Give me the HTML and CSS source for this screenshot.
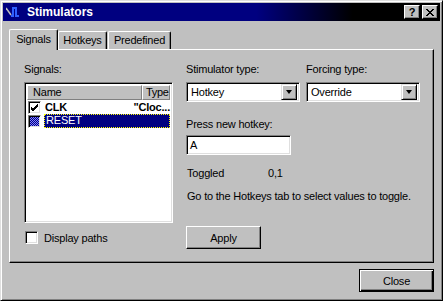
FILE: index.html
```html
<!DOCTYPE html>
<html lang="en">
<head>
    <meta charset="UTF-8">
    <title>Stimulators</title>
    <link rel="stylesheet" href="styles.css">
</head>
<body>
    <div class="window">
        <div class="titlebar">
            <svg class="app-icon" width="14" height="12" viewBox="0 0 14 12">
                <path d="M0 2 L5 9" stroke="#c0c0c0" stroke-width="1.5" fill="none"/>
                <path d="M5 10 H7 V2 H10 V10 H13" stroke="#3060ff" stroke-width="2" fill="none"/>
            </svg>
            <span class="title">Stimulators</span>
            <div class="caption-buttons">
                <div class="cap-btn">?</div>
                <div class="cap-btn close-x">
                    <svg width="8" height="7" viewBox="0 0 8 7"><path d="M0 0 L7 7 M1 0 L8 7 M7 0 L0 7 M8 0 L1 7" stroke="#000" stroke-width="1" fill="none"/></svg>
                </div>
            </div>
        </div>

        <div class="body">
            <div class="tabs">
                <div class="tab active">Signals</div>
                <div class="tab">Hotkeys</div>
                <div class="tab wide">Predefined</div>
            </div>

            <div class="panel">
                <div class="col-left">
                    <div class="label">Signals:</div>
                    <div class="listbox">
                        <div class="list-header">
                            <div class="hcol hname">Name</div>
                            <div class="hcol htype">Type</div>
                        </div>
                        <div class="row">
                            <span class="check small checked">
                                <svg width="9" height="9" viewBox="0 0 9 9"><path d="M1 4 L3 6 L8 1 M1 5 L3 7 L8 2 M1 6 L3 8 L8 3" stroke="#000" fill="none"/></svg>
                            </span>
                            <span class="cell-name bold">CLK</span>
                            <span class="cell-type bold">"Cloc...</span>
                        </div>
                        <div class="row">
                            <span class="check small dither"></span>
                            <span class="cell-sel">RESET</span>
                        </div>
                    </div>
                    <div class="checkline">
                        <span class="check"></span>
                        <span>Display paths</span>
                    </div>
                </div>

                <div class="col-right">
                    <div class="combo-row">
                        <div class="combo-group">
                            <div class="label">Stimulator type:</div>
                            <div class="combo">
                                <span class="combo-text">Hotkey</span>
                                <span class="combo-btn"><span class="arrow"></span></span>
                            </div>
                        </div>
                        <div class="combo-group">
                            <div class="label">Forcing type:</div>
                            <div class="combo">
                                <span class="combo-text">Override</span>
                                <span class="combo-btn"><span class="arrow"></span></span>
                            </div>
                        </div>
                    </div>
                    <div class="label hotkey-label">Press new hotkey:</div>
                    <div class="textbox">A</div>
                    <div class="toggled">
                        <span class="toggled-label">Toggled</span>
                        <span>0,1</span>
                    </div>
                    <div class="hint">Go to the Hotkeys tab to select values to toggle.</div>
                    <div class="btn apply">Apply</div>
                </div>
            </div>

            <div class="footer">
                <div class="btn default">Close</div>
            </div>
        </div>
    </div>
</body>
</html>
```

FILE: styles.css
```css
* { margin: 0; padding: 0; box-sizing: border-box; }

body {
    font-family: 'Liberation Sans', Arial, sans-serif;
    font-size: 11px;
    letter-spacing: -0.2px;
    color: #000000;
    background: #c0c0c0;
}

.window {
    width: 443px;
    height: 301px;
    background: #c0c0c0;
    border: 1px solid;
    border-color: #dfdfdf #000000 #000000 #dfdfdf;
    box-shadow: inset 1px 1px 0 #ffffff, inset -1px -1px 0 #808080;
    padding: 2px;
}

.titlebar {
    height: 18px;
    display: flex;
    align-items: center;
    padding: 0 2px 0 3px;
    background: linear-gradient(90deg, #000080 0%, #000080 58%, #000000 80%);
    color: #ffffff;
}

.app-icon {
    margin-right: 7px;
}

.title {
    font-weight: bold;
    font-size: 12px;
    letter-spacing: 0;
    flex: 1;
}

.caption-buttons {
    display: flex;
    gap: 2px;
}

.cap-btn {
    width: 16px;
    height: 14px;
    background: #c0c0c0;
    color: #000000;
    border: 1px solid;
    border-color: #ffffff #000000 #000000 #ffffff;
    box-shadow: inset -1px -1px 0 #808080;
    font-weight: bold;
    font-size: 11px;
    line-height: 12px;
    display: flex;
    align-items: center;
    justify-content: center;
}

.body {
    padding: 8px 6px 0 6px;
}

.tabs {
    display: flex;
    height: 20px;
    align-items: flex-end;
    position: relative;
    z-index: 1;
}

.tab {
    width: 49px;
    height: 18px;
    padding-top: 2px;
    text-align: center;
    border: 1px solid;
    border-bottom: none;
    border-color: #ffffff #000000 #000000 #ffffff;
    box-shadow: inset -1px 0 0 #808080;
    border-radius: 2px 2px 0 0;
}

.tab.active {
    height: 21px;
    margin-bottom: -1px;
    padding-top: 3px;
    background: #c0c0c0;
}

.tab.wide {
    width: 63px;
    margin-left: 1px;
}

.panel {
    width: 425px;
    height: 214px;
    border: 1px solid;
    border-color: #ffffff #000000 #000000 #ffffff;
    box-shadow: inset -1px -1px 0 #808080;
    display: flex;
    padding: 13px 0 0 14px;
    gap: 13px;
}

.label {
    height: 13px;
    line-height: 13px;
    margin-bottom: 6px;
    white-space: nowrap;
}

.col-left {
    width: 149px;
}

.listbox {
    width: 149px;
    height: 141px;
    background: #ffffff;
    border: 1px solid;
    border-color: #808080 #ffffff #ffffff #808080;
    box-shadow: inset 1px 1px 0 #000000, inset -1px -1px 0 #dfdfdf;
    padding: 2px;
}

.list-header {
    display: flex;
    height: 15px;
}

.hcol {
    background: #c0c0c0;
    border: 1px solid;
    border-color: #ffffff #808080 #808080 #ffffff;
    line-height: 13px;
    padding-left: 5px;
    white-space: nowrap;
}

.hname {
    width: 115px;
}

.htype {
    flex: 1;
    padding-left: 3px;
    letter-spacing: -0.3px;
}

.row {
    display: flex;
    align-items: center;
    height: 14px;
}

.check {
    width: 13px;
    height: 13px;
    background: #ffffff;
    border: 1px solid;
    border-color: #808080 #ffffff #ffffff #808080;
    box-shadow: inset 1px 1px 0 #000000, inset -1px -1px 0 #dfdfdf;
    display: inline-flex;
    align-items: center;
    justify-content: center;
    flex: none;
}

.check.small {
    margin-left: 1px;
}

.check.dither {
    background-color: #0000a0;
    background-image: repeating-conic-gradient(#8080ff 0 25%, #000080 0 50%);
    background-size: 2px 2px;
}

.cell-name {
    width: 103px;
    padding-left: 4px;
}

.cell-type {
    flex: 1;
    white-space: nowrap;
}

.bold {
    font-weight: bold;
}

.cell-sel {
    flex: 1;
    height: 14px;
    margin-left: 3px;
    background: #000080;
    color: #ffffff;
    line-height: 12px;
    padding-left: 2px;
    outline: 1px dotted #ffff00;
    outline-offset: -1px;
}

.checkline {
    display: flex;
    align-items: center;
    gap: 6px;
    margin-top: 8px;
    margin-left: 1px;
}

.col-right {
    width: 234px;
}

.combo-row {
    display: flex;
    gap: 6px;
}

.combo-group {
    width: 114px;
}

.combo {
    height: 20px;
    background: #ffffff;
    border: 1px solid;
    border-color: #808080 #ffffff #ffffff #808080;
    box-shadow: inset 1px 1px 0 #000000, inset -1px -1px 0 #dfdfdf;
    display: flex;
    align-items: center;
    padding: 2px;
}

.combo-text {
    flex: 1;
    padding-left: 2px;
}

.combo-btn {
    width: 16px;
    height: 16px;
    background: #c0c0c0;
    border: 1px solid;
    border-color: #dfdfdf #000000 #000000 #dfdfdf;
    box-shadow: inset 1px 1px 0 #ffffff, inset -1px -1px 0 #808080;
    display: flex;
    align-items: center;
    justify-content: center;
}

.arrow {
    width: 0;
    height: 0;
    border-left: 3px solid transparent;
    border-right: 3px solid transparent;
    border-top: 4px solid #000000;
}

.hotkey-label {
    margin-top: 16px;
    margin-bottom: 4px;
}

.textbox {
    width: 105px;
    height: 20px;
    background: #ffffff;
    border: 1px solid;
    border-color: #808080 #ffffff #ffffff #808080;
    box-shadow: inset 1px 1px 0 #000000, inset -1px -1px 0 #dfdfdf;
    padding: 3px 0 0 3px;
    line-height: 13px;
}

.toggled {
    display: flex;
    margin-top: 12px;
    line-height: 13px;
}

.toggled-label {
    width: 82px;
    padding-left: 1px;
}

.hint {
    margin-top: 10px;
    line-height: 13px;
    padding-left: 1px;
    white-space: nowrap;
}

.btn {
    width: 75px;
    height: 23px;
    background: #c0c0c0;
    border: 1px solid;
    border-color: #ffffff #000000 #000000 #ffffff;
    box-shadow: inset -1px -1px 0 #808080;
    display: flex;
    align-items: center;
    justify-content: center;
}

.apply {
    margin-top: 23px;
}

.footer {
    display: flex;
    justify-content: flex-end;
    padding-top: 6px;
    width: 425px;
}

.btn.default {
    border: 1px solid #000000;
    box-shadow: inset 1px 1px 0 #ffffff, inset -1px -1px 0 #000000, inset -2px -2px 0 #808080;
}
```
